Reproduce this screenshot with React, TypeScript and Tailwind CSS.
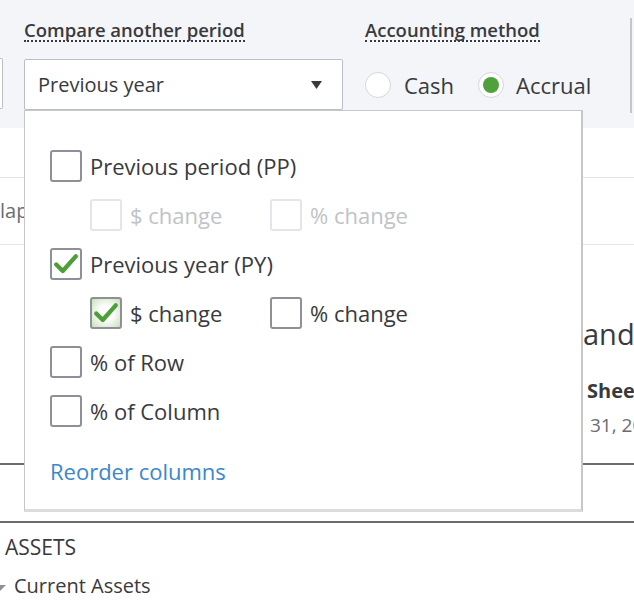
import React from 'react'

const font = { fontFamily: '"Open Sans", "Noto Sans", Arial, sans-serif' }

function Check({ className = '' }: { className?: string }) {
  return (
    <svg viewBox="0 0 24 24" className={className} fill="none">
      <path d="M3 12.5 L9 18.5 L21 5" stroke="#4d9f38" strokeWidth="4" strokeLinecap="round" strokeLinejoin="round" />
    </svg>
  )
}

function Box({ checked = false, disabled = false, focus = false }: { checked?: boolean; disabled?: boolean; focus?: boolean }) {
  const base = 'w-8 h-8 shrink-0 rounded-[3px] border-2 flex items-center justify-center'
  const tone = disabled
    ? 'border-[#e3e5e8] bg-white'
    : focus
      ? 'border-[#8d9096] bg-[radial-gradient(circle,#ffffff_35%,#c9dfba_100%)]'
      : 'border-[#8d9096] bg-white'
  return <div className={`${base} ${tone}`}>{checked && <Check className="w-[26px] h-[26px]" />}</div>
}

function Option({ label, checked, disabled, focus, width }: { label: string; checked?: boolean; disabled?: boolean; focus?: boolean; width?: string }) {
  return (
    <div className={`flex items-center gap-2 h-8 ${width ?? ''}`}>
      <Box checked={checked} disabled={disabled} focus={focus} />
      <span className={`text-[22px] leading-none whitespace-nowrap ${disabled ? 'text-[#c0c3c8]' : 'text-[#393a3d]'}`}>{label}</span>
    </div>
  )
}

export default function App() {
  return (
    <div className="relative w-[634px] h-[614px] overflow-hidden bg-white" style={font}>
      {/* filter band */}
      <div className="h-[128px] bg-[#f4f5f8] flex items-start pt-[19px]">
        <div className="mt-[39px] mr-[21px] h-[51px] w-[3px] rounded-r-[2px] border border-l-0 border-[#babec5] bg-white" />

        <div className="w-[319px]">
          <span className="inline-block text-[18.5px] leading-[21px] font-semibold text-[#393a3d] border-b-2 border-dotted border-[#393a3d]">
            Compare another period
          </span>
          <div className="mt-[16px] h-[51px] rounded-[2px] border border-[#babec5] bg-white flex items-center justify-between pl-[13px] pr-[20px]">
            <span className="text-[20px] text-[#393a3d]">Previous year</span>
            <svg width="11" height="8" viewBox="0 0 11 8">
              <path d="M0 0 H11 L5.5 8 Z" fill="#393a3d" />
            </svg>
          </div>
        </div>

        <div className="ml-[22px]">
          <span className="inline-block text-[18.5px] leading-[21px] font-semibold text-[#393a3d] border-b-2 border-dotted border-[#393a3d]">
            Accounting method
          </span>
          <div className="mt-[27px] flex items-center">
            <div className="w-[26px] h-[26px] rounded-full border border-[#d4d7dc] bg-white" />
            <span className="ml-[13px] text-[22px] leading-[30px] text-[#393a3d]">Cash</span>
            <div className="ml-[24px] w-[26px] h-[26px] rounded-full border border-[#d4d7dc] bg-white flex items-center justify-center">
              <div className="w-[16px] h-[16px] rounded-full bg-[#4fa23b]" />
            </div>
            <span className="ml-[12px] text-[22px] leading-[30px] text-[#393a3d]">Accrual</span>
          </div>
        </div>

        <div className="ml-auto mr-[2px] mt-[-1px] h-[95px] w-[2px] bg-[#c4c6ca]" />
      </div>

      {/* report behind */}
      <div className="mt-[49px] border-t border-[#e3e5e8] h-[67px] flex items-center">
        <span className="text-[20px] text-[#6b6c72] whitespace-nowrap">lapse</span>
      </div>
      <div className="border-t border-[#e3e5e8] h-[219px] pl-[583px] pt-[70px] text-[#393a3d] whitespace-nowrap">
        <div className="text-[29px] leading-[38px]">and Landscaping</div>
        <div className="mt-[26px] pl-[4px] text-[20px] leading-[24px] font-bold">Sheet</div>
        <div className="mt-[10px] pl-[7px] text-[19px] leading-[24px] text-[#6b6c72]">31, 2023</div>
      </div>
      <div className="h-[2px] bg-[#6b6c72]" />
      <div className="h-[56px]" />
      <div className="h-[2px] bg-[#6b6c72]" />
      <div className="pl-[5px] pt-[10px] text-[21px] leading-[28px] text-[#393a3d]">ASSETS</div>
      <div className="mt-[11px] flex items-center text-[20px] leading-[28px] text-[#393a3d]">
        <svg width="6" height="6" viewBox="0 0 6 6" className="mt-[4px]">
          <path d="M0 0 H6 L0 6 Z" fill="#8d9096" />
        </svg>
        <span className="ml-[8px]">Current Assets</span>
      </div>

      {/* dropdown menu */}
      <div className="absolute left-[24px] top-[110px] w-[559px] h-[402px] bg-white border border-[#c6c7c9] border-r-[2px] border-b-[3px] border-b-[#dcdcdc] pl-[25px] pt-[39px]">
        <div className="flex flex-col gap-[17px]">
          <Option label="Previous period (PP)" />
          <div className="flex pl-[40px]">
            <Option label="$ change" disabled width="w-[180px]" />
            <Option label="% change" disabled />
          </div>
          <Option label="Previous year (PY)" checked />
          <div className="flex pl-[40px]">
            <Option label="$ change" checked focus width="w-[180px]" />
            <Option label="% change" />
          </div>
          <Option label="% of Row" />
          <Option label="% of Column" />
        </div>
        <div className="mt-[29px] text-[22px] leading-[30px] text-[#3b87c9]">Reorder columns</div>
      </div>
    </div>
  )
}
